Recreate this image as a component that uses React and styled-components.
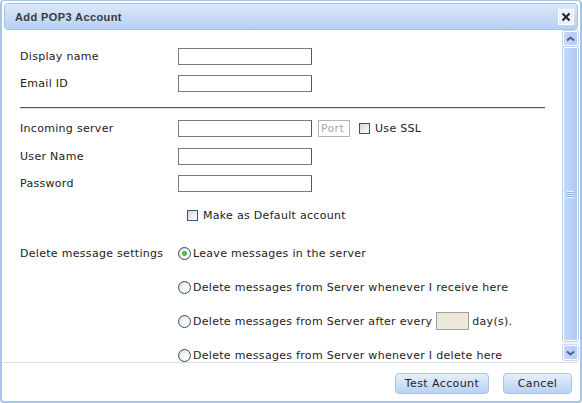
import React from 'react';
import styled, { createGlobalStyle } from 'styled-components';

const GlobalStyle = createGlobalStyle`
  html, body {
    margin: 0;
    padding: 0;
    background: #fff;
  }
  body {
    font-family: "DejaVu Sans", Verdana, sans-serif;
    font-size: 11px;
    letter-spacing: 0.3px;
    color: #222;
  }
`;

const Window = styled.div`
  width: 582px;
  height: 403px;
  box-sizing: border-box;
  border: 2px solid #a9c5e6;
  border-top-width: 1px;
  border-radius: 4px;
  display: flex;
  flex-direction: column;
  background: #fff;
  overflow: hidden;
`;

const TitleBar = styled.div`
  margin: 2px 2px 0 2px;
  height: 27px;
  box-sizing: border-box;
  border: 1px solid #a2bfe6;
  border-radius: 4px;
  background: linear-gradient(to bottom, #dbe8f9 0%, #c7dbf5 55%, #b8d1f1 100%);
  display: flex;
  align-items: center;
  justify-content: space-between;
  padding: 0 3px 0 10px;
`;

const Title = styled.span`
  font-family: "Liberation Sans", Arial, sans-serif;
  font-weight: bold;
  font-size: 11px;
  letter-spacing: 0.4px;
  color: #3a3a3a;
`;

const CloseButton = styled.div`
  width: 16px;
  height: 16px;
  box-sizing: border-box;
  border: 1px solid #fff;
  background: #e8f0fb;
  display: flex;
  align-items: center;
  justify-content: center;
`;

const Body = styled.div`
  flex: 1;
  display: flex;
  min-height: 0;
  border-bottom: 1px solid #dcdcdc;
  margin-right: 2px;
`;

const Content = styled.div`
  flex: 1;
  overflow: hidden;
  padding: 13px 16px 0 18px;
`;

const Row = styled.div`
  display: flex;
  align-items: center;
  height: ${p => p.$h || 27}px;
  margin-top: ${p => p.$mt || 0}px;
`;

const Label = styled.div`
  width: 158px;
  flex-shrink: 0;
`;

const TextInput = styled.div`
  width: ${p => p.$w || 134}px;
  height: 17px;
  box-sizing: border-box;
  border: 1px solid #7a7a7a;
  border-right-color: #555;
  background: ${p => p.$bg || '#fff'};
  color: #aaa;
  display: flex;
  align-items: center;
  padding-left: 2px;
  font-size: 11px;
`;

const PortInput = styled(TextInput)`
  border-color: #b5b5b5;
  margin-left: 6px;
`;

const DayInput = styled(TextInput)`
  width: 33px;
  height: 18px;
  border-color: #a0a0a0;
  background: #ece9d8;
  margin: 0 3px 0 4px;
`;

const Divider = styled.div`
  height: 1px;
  background: #555;
  border-bottom: 1px solid #dedede;
  margin: 10px 2px 6px 0;
`;

const Check = styled.span`
  display: inline-block;
  width: 11px;
  height: 11px;
  box-sizing: border-box;
  border: 1px solid #2f5684;
  background: linear-gradient(135deg, #d6d6d0 0%, #f4f4f0 70%, #fff 100%);
  margin-right: 5px;
  margin-left: ${p => p.$ml || 0}px;
`;

const Radio = styled.span`
  display: inline-block;
  width: 13px;
  height: 13px;
  box-sizing: border-box;
  border-radius: 50%;
  border: 1px solid #2c4f78;
  background: radial-gradient(circle at 65% 65%, #fff 0%, #f2f2ee 45%, #d4d4ce 100%);
  margin: 0 2px 0 0;
  position: relative;
  flex-shrink: 0;

  &::after {
    content: '';
    display: ${p => (p.$on ? 'block' : 'none')};
    position: absolute;
    left: 3px;
    top: 3px;
    width: 5px;
    height: 5px;
    border-radius: 50%;
    background: radial-gradient(circle, #5fd85f 0%, #21a121 100%);
  }
`;

const Option = styled.div`
  display: flex;
  align-items: center;
`;

const Scrollbar = styled.div`
  width: 15px;
  margin: 1px 0 2px 0;
  background: #f3f1ea;
  display: flex;
  flex-direction: column;
  gap: 1px;
`;

const ArrowButton = styled.div`
  height: 15px;
  box-sizing: border-box;
  border: 1px solid #fff;
  border-radius: 2px;
  background: linear-gradient(to right, #c6d6f6, #b5cbf4);
  box-shadow: 0 0 0 1px #c8d6ee;
  display: flex;
  align-items: center;
  justify-content: center;
`;

const Thumb = styled.div`
  flex: 1;
  margin-bottom: 3px;
  box-sizing: border-box;
  border: 1px solid #fff;
  border-radius: 2px;
  box-shadow: 0 0 0 1px #b9cdf0;
  background: linear-gradient(to right, #c9d9f9, #b8cff7 60%, #aec6f2);
  display: flex;
  align-items: center;
  justify-content: center;
`;

const Grip = styled.div`
  width: 7px;
  height: 7px;
  background: repeating-linear-gradient(to bottom, #eef3fd 0 1px, #8fa9d8 1px 2px);
`;

const Footer = styled.div`
  height: 36px;
  display: flex;
  align-items: center;
  justify-content: flex-end;
  gap: 14px;
  padding: 2px 8px 0 0;
`;

const Button = styled.button`
  width: ${p => p.$w}px;
  height: 21px;
  border: 1px solid #a9c4e8;
  border-radius: 4px;
  background: linear-gradient(to bottom, #e6f0fd 0%, #cfe0f8 50%, #b9d2f3 100%);
  font-family: "DejaVu Sans", Verdana, sans-serif;
  font-size: 11px;
  letter-spacing: 0.4px;
  color: #222;
  padding: 0;
`;

const Arrow = ({ down }) => (
  <svg width="9" height="6" viewBox="0 0 9 6">
    <path
      d={down ? 'M1 1.5 L4.5 4.5 L8 1.5' : 'M1 4.5 L4.5 1.5 L8 4.5'}
      fill="none"
      stroke="#4d6185"
      strokeWidth="2"
    />
  </svg>
);

export default function App() {
  return (
    <>
      <GlobalStyle />
      <Window>
        <TitleBar>
          <Title>Add POP3 Account</Title>
          <CloseButton>
            <svg width="10" height="10" viewBox="0 0 10 10">
              <path d="M1.5 1.5 L8.5 8.5 M8.5 1.5 L1.5 8.5" stroke="#222" strokeWidth="2" />
            </svg>
          </CloseButton>
        </TitleBar>
        <Body>
          <Content>
            <Row>
              <Label>Display name</Label>
              <TextInput />
            </Row>
            <Row>
              <Label>Email ID</Label>
              <TextInput />
            </Row>
            <Divider />
            <Row>
              <Label>Incoming server</Label>
              <TextInput />
              <PortInput $w={32}>Port</PortInput>
              <Check $ml={9} />
              Use SSL
            </Row>
            <Row $mt={1}>
              <Label>User Name</Label>
              <TextInput />
            </Row>
            <Row>
              <Label>Password</Label>
              <TextInput />
            </Row>
            <Row $mt={5}>
              <Label />
              <Check $ml={9} />
              Make as Default account
            </Row>
            <Row $h={34} $mt={7}>
              <Label>Delete message settings</Label>
              <Option>
                <Radio $on />
                Leave messages in the server
              </Option>
            </Row>
            <Row $h={34}>
              <Label />
              <Option>
                <Radio />
                Delete messages from Server whenever I receive here
              </Option>
            </Row>
            <Row $h={34}>
              <Label />
              <Option>
                <Radio />
                Delete messages from Server after every
                <DayInput />
                day(s).
              </Option>
            </Row>
            <Row $h={34}>
              <Label />
              <Option>
                <Radio />
                Delete messages from Server whenever I delete here
              </Option>
            </Row>
          </Content>
          <Scrollbar>
            <ArrowButton>
              <Arrow />
            </ArrowButton>
            <Thumb>
              <Grip />
            </Thumb>
            <ArrowButton>
              <Arrow down />
            </ArrowButton>
          </Scrollbar>
        </Body>
        <Footer>
          <Button $w={94}>Test Account</Button>
          <Button $w={69}>Cancel</Button>
        </Footer>
      </Window>
    </>
  );
}
